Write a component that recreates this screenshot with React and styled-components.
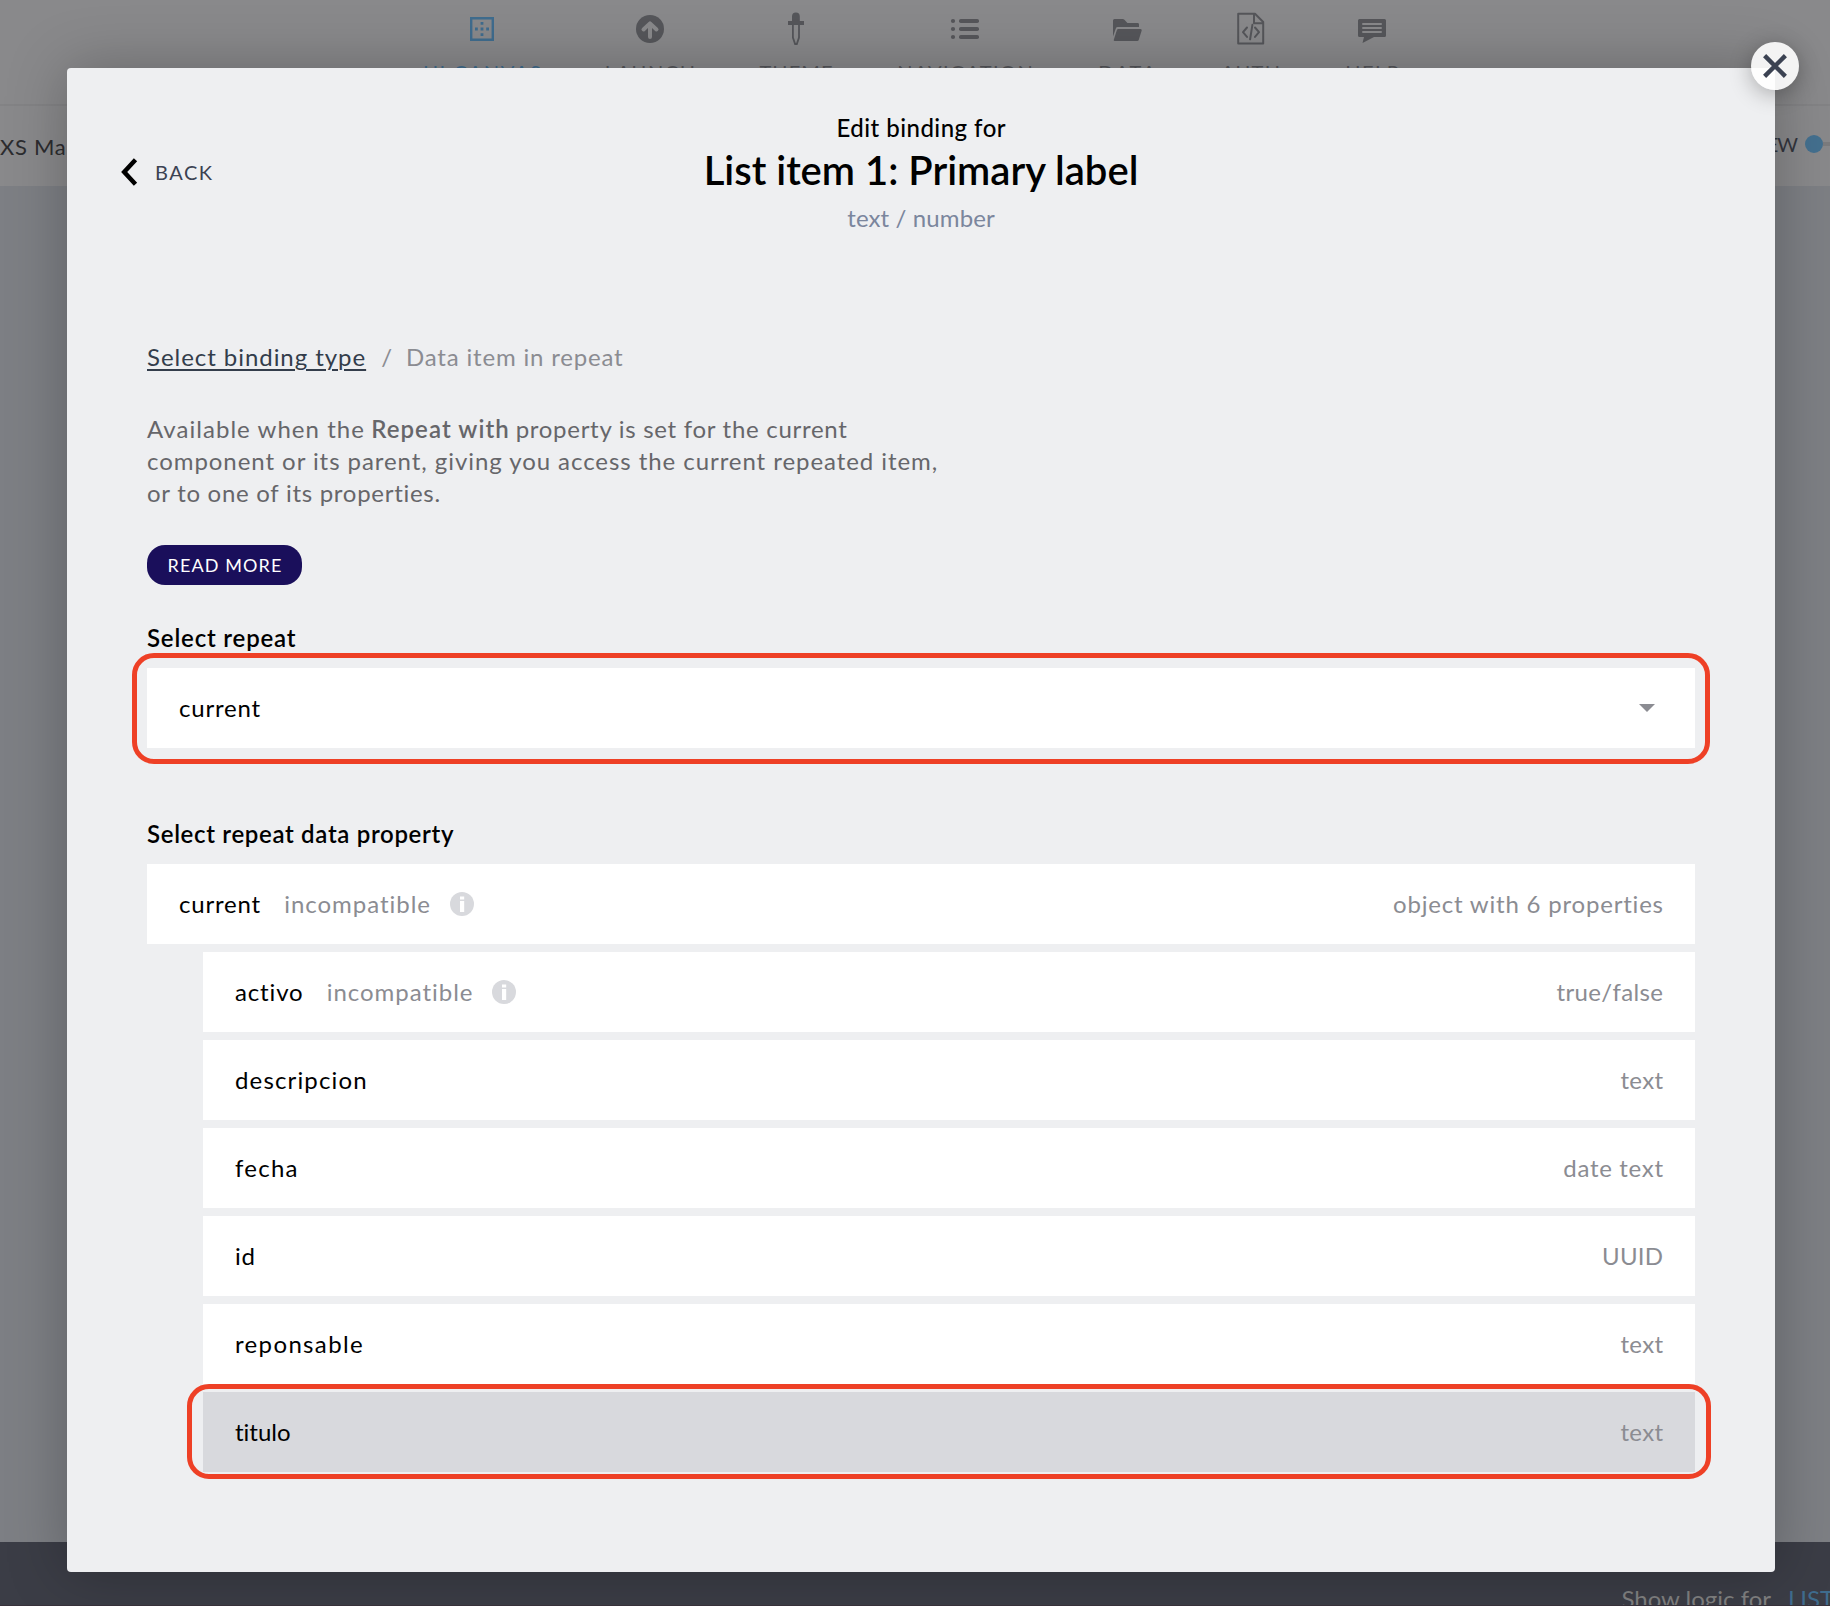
import React from 'react';
import styled, { createGlobalStyle } from 'styled-components';

const GlobalStyle = createGlobalStyle`
  *, *::before, *::after { box-sizing: border-box; }
  html, body { margin: 0; padding: 0; overflow: hidden; }
  body {
    font-family: Lato, "Liberation Sans", sans-serif;
    font-variant-ligatures: none;
    background: #7d7f84;
  }
`;

const Screen = styled.div`
  position: relative;
  display: flex;
  flex-direction: column;
  width: 100vw;
  height: 100vh;
  overflow: hidden;
`;

/* ---------- editor behind the dialog ---------- */

const TopNav = styled.nav`
  display: flex;
  flex: 0 0 106px;
  padding-left: 392px;
  background: #89898b;
  border-bottom: 2px solid #838385;
`;

const NavItem = styled.div`
  display: flex;
  flex: 0 0 ${(p) => p.$width}px;
  flex-direction: column;
  align-items: center;
  gap: 14px;
  color: ${(p) => (p.$active ? '#3f6c8e' : '#55565a')};
  font-size: 20px;
  line-height: 24px;
`;

const SubBar = styled.div`
  display: flex;
  flex: 0 0 80px;
  align-items: center;
  justify-content: space-between;
  background: #89898b;
  color: #2c2c2f;
`;

const PreviewToggle = styled.div`
  display: flex;
  align-items: center;
  height: 76px;
  margin-bottom: 4px;
  color: #33353d;
`;

const Knob = styled.span`
  width: 18px;
  height: 18px;
  margin-left: 7px;
  border-radius: 50%;
  background: #44708f;
`;

const Track = styled.span`
  width: 7px;
  height: 4px;
  background: #7b7b7d;
`;

const Workspace = styled.div`
  flex: 1;
  background: #7d7f84;
`;

const LogicBar = styled.footer`
  display: flex;
  flex: 0 0 64px;
  align-items: flex-start;
  justify-content: flex-end;
  gap: 17px;
  padding-top: 41px;
  overflow: hidden;
  background: #3b3d46;
  border-bottom: 1px solid #38323b;
  color: #808080;
  font-size: 24px;
  line-height: 32px;
`;

const LogicTarget = styled.span`
  color: #3f6c8e;
  flex: 0 0 42px;
  min-width: 0;
  white-space: nowrap;
`;

/* ---------- dialog ---------- */

const Overlay = styled.div`
  position: absolute;
  inset: 0;
  display: flex;
  padding: 68px 55px 34px 67px;
`;

const Dialog = styled.section`
  position: relative;
  flex: 1;
  padding: 44px 80px 0;
  border-radius: 4px;
  background: #eeeff1;
  box-shadow: 0 0 60px rgba(0, 0, 0, 0.26);
`;

const CloseButton = styled.button`
  position: absolute;
  top: -26px;
  right: -24px;
  display: grid;
  place-items: center;
  width: 48px;
  height: 48px;
  padding: 0;
  border: 0;
  border-radius: 50%;
  background: rgba(255, 255, 255, 0.9);
  box-shadow: 0 4px 22px rgba(0, 0, 0, 0.3);
`;

const Header = styled.header`
  display: grid;
  grid-template-columns: 1fr auto 1fr;
  align-items: center;
  height: 122px;
  margin: 0 -27px;
`;

const BackButton = styled.button`
  display: flex;
  align-items: center;
  justify-self: start;
  gap: 17px;
  padding: 0 0 2px;
  border: 0;
  background: none;
  color: #3b4252;
  font: 400 20px/32px Lato, sans-serif;
`;

const Heading = styled.div`
  display: flex;
  flex-direction: column;
  align-items: center;
  font-size: 24px;
  line-height: 32px;
  white-space: nowrap;
`;

const Title = styled.h1`
  margin: 1px 0 7px;
  font-size: 40px;
  font-weight: 600;
  line-height: 50px;
`;

const Accepts = styled.div`
  color: #7b869d;
`;

const Breadcrumb = styled.div`
  display: flex;
  align-items: baseline;
  margin-top: 107px;
  color: #8b8c92;
  font-size: 24px;
  line-height: 32px;
`;

const CrumbLink = styled.a`
  color: #333d4b;
  text-decoration: underline;
  text-decoration-thickness: 2px;
  text-underline-offset: 3px;
  letter-spacing: 0.95px;
`;

const Slash = styled.span`
  margin: 0 14px 0 15px;
`;

const Description = styled.p`
  margin: 40px 0 0;
  color: #66666a;
  font-size: 24px;
  line-height: 32px;
  white-space: nowrap;
`;

const ReadMore = styled.button`
  display: block;
  width: 155px;
  height: 40px;
  margin-top: 36px;
  padding: 0;
  border: 0;
  border-radius: 18px;
  background: #1a0f5b;
  color: #fff;
  font: 400 18px/40px Lato, sans-serif;
`;

const Label = styled.h2`
  margin: ${(p) => p.$top}px 0 14px;
  font-size: 24px;
  font-weight: 600;
  line-height: 32px;
`;

const Field = styled.div`
  position: relative;
  display: flex;
  align-items: center;
  height: 80px;
  padding: 0 32px 2px;
  background: ${(p) => (p.$selected ? '#d8d9dd' : '#fff')};
  color: #000;
  font-size: 24px;
`;

const Ring = styled.div`
  position: absolute;
  inset: ${(p) => p.$inset};
  border: 5px solid #ee4026;
  border-radius: 22px;
  pointer-events: none;
`;

const Caret = styled.span`
  margin: 1px 8px 0 auto;
  border: 8px solid transparent;
  border-top-color: #8b8c92;
  border-bottom: 0;
`;

const PropertyList = styled.div`
  display: flex;
  flex-direction: column;
  gap: 8px;
`;

const Children = styled(PropertyList)`
  margin-left: 56px;
`;

const Incompatible = styled.span`
  display: flex;
  align-items: center;
  gap: 20px;
  margin-left: 24px;
  color: #8b8c92;

  svg {
    margin: 2px 0 0;
  }
`;

const TypeName = styled.span`
  margin-left: auto;
  color: #8b8c92;
`;

/* Tracked text: the trailing letter space is taken back so edges stay flush. */
const Tracked = styled.span`
  letter-spacing: ${(p) => p.$ls}px;
  margin-right: ${(p) => -p.$ls}px;
  font-size: ${(p) => (p.$size ? `${p.$size}px` : 'inherit')};
  font-weight: ${(p) => p.$weight || 'inherit'};
  white-space: pre;
`;

/* ---------- icons ---------- */

const NavIcon = ({ children }) => (
  <svg width="44" height="46" viewBox="0 0 44 46" fill="currentColor">
    {children}
  </svg>
);

const CanvasIcon = () => (
  <NavIcon>
    <path fill="none" stroke="currentColor" strokeWidth="2.4" d="M11.2 18.2h21.6v21.6H11.2z" />
    <path d="M20.6 22h2.8v2.8h-2.8zM20.6 27.6h2.8v2.8h-2.8zM20.6 33.2h2.8V36h-2.8zM15 27.6h2.8v2.8H15zM26.2 27.6H29v2.8h-2.8z" />
  </NavIcon>
);

const LaunchIcon = () => (
  <NavIcon>
    <circle cx="22" cy="29" r="14" />
    <path
      fill="none"
      stroke="#89898b"
      strokeWidth="4"
      strokeLinecap="round"
      strokeLinejoin="round"
      d="M22 37V24.5M15.5 29.5 22 23.4l6.5 6.1"
    />
  </NavIcon>
);

const ThemeIcon = () => (
  <NavIcon>
    <path d="M18 21v-4.500a3.900 3.900 0 0 1 7.800 0V21H30v4H14v-4z" />
    <path fill="none" stroke="currentColor" strokeWidth="1.800" d="M18.900 25v12.500l2.200 6.500h1.700l2.200-6.500V25" />
  </NavIcon>
);

const ListIcon = () => (
  <NavIcon>
    {[21, 29, 37].map((y) => (
      <React.Fragment key={y}>
        <circle cx="10" cy={y} r="2.100" />
        <rect x="16" y={y - 2} width="20" height="4" rx="1.800" />
      </React.Fragment>
    ))}
  </NavIcon>
);

const DataIcon = () => (
  <NavIcon>
    <path d="M8 36.500V20.500q0-1.500 1.500-1.500h8.200q1 0 1.700.8l3 3.200h10.200q1.400 0 1.400 1.400V27H12.500q-1.200 0-1.600 1.200z" />
    <path d="M13.500 29H35.500q1.600 0 1.200 1.500l-3 9.500q-.3 1-1.400 1H9.800q-1.400 0-1-1.300l3-9.500q.4-1.200 1.700-1.200z" />
  </NavIcon>
);

const AuthIcon = () => (
  <NavIcon>
    <g fill="none" stroke="currentColor" strokeWidth="2" strokeLinejoin="round" strokeLinecap="round">
      <path d="M9.200 13.800h16.800l8.200 8.200v21.600h-25zM25 14v9.200h9" />
      <path d="m18 27.500-4 4.700 4 4.700M26 27.500l4 4.700-4 4.700M23.400 24.800l-2.300 14.500" />
    </g>
  </NavIcon>
);

const HelpIcon = () => (
  <NavIcon>
    <path d="M9.500 19h25q1.500 0 1.500 1.500v15q0 1.500-1.500 1.500H24l-11.500 6L14 37H9.500Q8 37 8 35.500v-15Q8 19 9.500 19z" />
    <path stroke="#89898b" strokeWidth="2" strokeLinecap="round" d="M13 24h18M13 28h18M13 32h18" />
  </NavIcon>
);

const InfoIcon = () => (
  <svg width="24" height="24" viewBox="0 0 24 24">
    <circle cx="12" cy="12" r="12" fill="#d8d9dd" />
    <path fill="#fff" d="M10 4.600h4.200v3H10zM10 9h4.200v11H10z" />
  </svg>
);

const BackIcon = () => (
  <svg width="18" height="28" viewBox="0 0 18 28" fill="none" stroke="#000" strokeWidth="4.500">
    <path d="M15.500 1.800 4.200 14l11.300 12.200" />
  </svg>
);

const CloseIcon = () => (
  <svg width="24" height="24" viewBox="0 0 24 24" stroke="#3b4252" strokeWidth="4.400">
    <path d="m1.600 1.600 20.800 20.800M22.400 1.600 1.600 22.400" />
  </svg>
);

/* ---------- data ---------- */

const NAV = [
  { label: 'UI CANVAS', width: 180, ls: 1.64, Icon: CanvasIcon, active: true },
  { label: 'LAUNCH', width: 156, ls: 1.64, Icon: LaunchIcon },
  { label: 'THEME', width: 136, ls: 1.1, Icon: ThemeIcon },
  { label: 'NAVIGATION', width: 202, ls: 1.5, Icon: ListIcon },
  { label: 'DATA', width: 122, ls: 2.2, Icon: DataIcon },
  { label: 'AUTH', width: 125, ls: 1.4, Icon: AuthIcon },
  { label: 'HELP', width: 118, ls: 1.4, Icon: HelpIcon },
];

const ROOT = { name: 'current', ls: 0.81, type: 'object with 6 properties', typeLs: 0.8, incompatible: true };

const PROPERTIES = [
  { name: 'activo', ls: 0.85, type: 'true/false', typeLs: 0.4, incompatible: true },
  { name: 'descripcion', ls: 1.15, type: 'text', typeLs: 0.3 },
  { name: 'fecha', ls: 1.25, type: 'date text', typeLs: 0.68 },
  { name: 'id', ls: 0.8, type: 'UUID', typeLs: 0.2 },
  { name: 'reponsable', ls: 1.35, type: 'text', typeLs: 0.3 },
  { name: 'titulo', ls: 0, type: 'text', typeLs: 0.3, selected: true },
];

const PropertyRow = ({ name, ls, type, typeLs, incompatible, selected }) => (
  <Field $selected={selected}>
    <Tracked $ls={ls}>{name}</Tracked>
    {incompatible && (
      <Incompatible>
        <Tracked $ls={0.97}>incompatible</Tracked>
        <InfoIcon />
      </Incompatible>
    )}
    <TypeName>
      <Tracked $ls={typeLs}>{type}</Tracked>
    </TypeName>
    {selected && <Ring $inset="-8px -16px -7px" />}
  </Field>
);

export default function App() {
  return (
    <Screen>
      <GlobalStyle />
      <TopNav>
        {NAV.map(({ label, width, ls, Icon, active }) => (
          <NavItem key={label} $width={width} $active={active}>
            <Icon />
            <Tracked $ls={ls}>{label}</Tracked>
          </NavItem>
        ))}
      </TopNav>
      <SubBar>
        <Tracked $ls={0.7} $size={22}>XS Ma</Tracked>
        <PreviewToggle>
          <Tracked $ls={-1} $size={20}>EW</Tracked>
          <Knob />
          <Track />
        </PreviewToggle>
      </SubBar>
      <Workspace />
      <LogicBar>
        <Tracked $ls={0}>Show logic for</Tracked>
        <LogicTarget>LIST</LogicTarget>
      </LogicBar>

      <Overlay>
        <Dialog>
          <CloseButton aria-label="Close">
            <CloseIcon />
          </CloseButton>
          <Header>
            <BackButton>
              <BackIcon />
              <Tracked $ls={1.5}>BACK</Tracked>
            </BackButton>
            <Heading>
              <Tracked $ls={0.47} $weight={500}>Edit binding for</Tracked>
              <Title>List item 1: Primary label</Title>
              <Accepts>
                <Tracked $ls={0.11}>text / number</Tracked>
              </Accepts>
            </Heading>
          </Header>

          <Breadcrumb>
            <CrumbLink>Select binding type</CrumbLink>
            <Slash>/</Slash>
            <Tracked $ls={0.82}>Data item in repeat</Tracked>
          </Breadcrumb>

          <Description>
            <Tracked $ls={1.04}>Available when the </Tracked>
            <Tracked $ls={1.08} $weight={600}>Repeat with</Tracked>
            <Tracked $ls={0.71}> property is set for the current</Tracked>
            <br />
            <Tracked $ls={0.94}>component or its parent, giving you access the current repeated item,</Tracked>
            <br />
            <Tracked $ls={0.72}>or to one of its properties.</Tracked>
          </Description>

          <ReadMore>
            <Tracked $ls={1.1}>READ MORE</Tracked>
          </ReadMore>

          <Label $top={37}>
            <Tracked $ls={0.82}>Select repeat</Tracked>
          </Label>
          <Field>
            <Tracked $ls={0.81}>current</Tracked>
            <Caret />
            <Ring $inset="-15px -15px -16px" />
          </Field>

          <Label $top={70}>
            <Tracked $ls={0.67}>Select repeat data property</Tracked>
          </Label>
          <PropertyList>
            <PropertyRow {...ROOT} />
            <Children>
              {PROPERTIES.map((p) => (
                <PropertyRow key={p.name} {...p} />
              ))}
            </Children>
          </PropertyList>
        </Dialog>
      </Overlay>
    </Screen>
  );
}
